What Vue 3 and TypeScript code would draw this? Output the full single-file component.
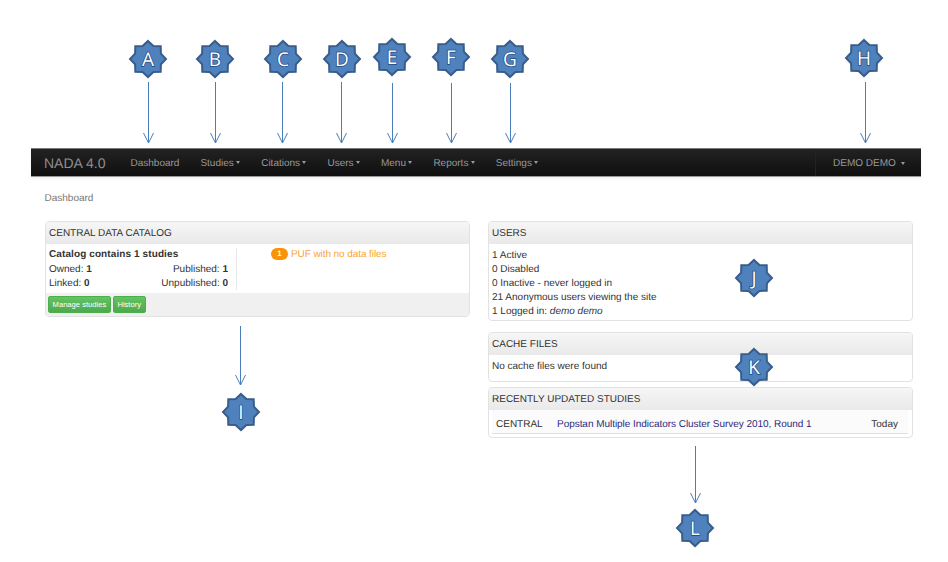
<script setup lang="ts">
interface Marker {
  label: string
  x: number
  y: number
  arrow?: { x: number; from: number; to: number }
}

const navItems = [
  { label: 'Dashboard', caret: false },
  { label: 'Studies', caret: true },
  { label: 'Citations', caret: true },
  { label: 'Users', caret: true },
  { label: 'Menu', caret: true },
  { label: 'Reports', caret: true },
  { label: 'Settings', caret: true },
]

const markers: Marker[] = [
  { label: 'A', x: 148, y: 59, arrow: { x: 148.5, from: 82, to: 143 } },
  { label: 'B', x: 215, y: 59, arrow: { x: 215.5, from: 82, to: 143 } },
  { label: 'C', x: 283, y: 59, arrow: { x: 282.5, from: 82, to: 143 } },
  { label: 'D', x: 342, y: 59, arrow: { x: 341.5, from: 82, to: 143 } },
  { label: 'E', x: 392, y: 57, arrow: { x: 392.5, from: 83, to: 143 } },
  { label: 'F', x: 451, y: 57, arrow: { x: 451.5, from: 83, to: 143 } },
  { label: 'G', x: 510, y: 59, arrow: { x: 510.5, from: 83, to: 143 } },
  { label: 'H', x: 864, y: 58, arrow: { x: 865.5, from: 82, to: 143 } },
  { label: 'I', x: 241, y: 412, arrow: { x: 240.5, from: 326, to: 385 } },
  { label: 'J', x: 754, y: 278 },
  { label: 'K', x: 754, y: 367 },
  { label: 'L', x: 695, y: 528, arrow: { x: 695.5, from: 446, to: 503 } },
]

// estrella de 8 puntas, igual que la forma de Office
function starPoints(cx: number, cy: number): string {
  const pts: string[] = []
  for (let i = 0; i < 16; i++) {
    const r = i % 2 === 0 ? 18 : 14
    const a = (i * Math.PI) / 8 - Math.PI / 2
    pts.push(`${(cx + r * Math.cos(a)).toFixed(1)},${(cy + r * Math.sin(a)).toFixed(1)}`)
  }
  return pts.join(' ')
}

const userLines = ['1 Active', '0 Disabled', '0 Inactive - never logged in', '21 Anonymous users viewing the site']
</script>

<template>
  <div class="page">
    <nav class="navbar">
      <span class="brand">NADA 4.0</span>
      <ul class="nav">
        <li v-for="item in navItems" :key="item.label">
          {{ item.label }}<i v-if="item.caret" class="caret"></i>
        </li>
      </ul>
      <div class="user-menu">DEMO DEMO<i class="caret caret-user"></i></div>
    </nav>

    <div class="crumb">Dashboard</div>

    <div class="columns">
      <div class="col">
        <section class="panel">
          <h3 class="panel-head">CENTRAL DATA CATALOG</h3>
          <div class="catalog-body">
            <div class="catalog-stats">
              <strong class="catalog-title">Catalog contains 1 studies</strong>
              <div class="stat-row">
                <span>Owned: <b>1</b></span>
                <span>Published: <b>1</b></span>
              </div>
              <div class="stat-row">
                <span>Linked: <b>0</b></span>
                <span>Unpublished: <b>0</b></span>
              </div>
            </div>
            <div class="catalog-alerts">
              <span class="badge">1</span>
              <span class="alert-text">PUF with no data files</span>
            </div>
          </div>
          <div class="catalog-foot">
            <button class="btn">Manage studies</button>
            <button class="btn">History</button>
          </div>
        </section>
      </div>

      <div class="col">
        <section class="panel users">
          <h3 class="panel-head">USERS</h3>
          <div class="panel-body">
            <div v-for="line in userLines" :key="line" class="line">{{ line }}</div>
            <div class="line">1 Logged in: <em>demo demo</em></div>
          </div>
        </section>

        <section class="panel cache">
          <h3 class="panel-head">CACHE FILES</h3>
          <div class="panel-body">
            <div class="line">No cache files were found</div>
          </div>
        </section>

        <section class="panel recent">
          <h3 class="panel-head">RECENTLY UPDATED STUDIES</h3>
          <div class="recent-row">
            <span class="repo">CENTRAL</span>
            <a class="study">Popstan Multiple Indicators Cluster Survey 2010, Round 1</a>
            <span class="when">Today</span>
          </div>
        </section>
      </div>
    </div>

    <!-- anotaciones encima de la captura -->
    <svg class="notes" width="948" height="562" viewBox="0 0 948 562">
      <g v-for="m in markers" :key="m.label">
        <g v-if="m.arrow" class="arrow">
          <line :x1="m.arrow.x" :y1="m.arrow.from" :x2="m.arrow.x" :y2="m.arrow.to" />
          <polyline
            :points="`${m.arrow.x - 5},${m.arrow.to - 10} ${m.arrow.x},${m.arrow.to} ${m.arrow.x + 5},${m.arrow.to - 10}`"
          />
        </g>
        <polygon class="star" :points="starPoints(m.x, m.y)" />
        <text class="star-label" :x="m.x" :y="m.y + 7" text-anchor="middle">{{ m.label }}</text>
      </g>
    </svg>
  </div>
</template>

<style scoped>
.page {
  position: relative;
  width: 948px;
  height: 562px;
  overflow: hidden;
  padding-top: 148px;
  box-sizing: border-box;
  background: #fff;
  font-family: "Liberation Sans", Arial, sans-serif;
  font-size: 10px;
  color: #333;
  text-rendering: geometricPrecision;
}

.navbar {
  display: flex;
  align-items: center;
  width: 890px;
  height: 29px;
  margin-left: 31px;
  padding-top: 1px;
  box-sizing: border-box;
  background: linear-gradient(#222, #0f0f0f);
  border-top: 1px solid #777;
  border-bottom: 1px solid #999;
  box-shadow: 0 2px 3px rgba(0, 0, 0, 0.06);
  color: #999;
}

.brand {
  margin-left: 13px;
  margin-right: 14.5px;
  font-size: 14px;
  color: #8f8f8f;
}

.nav {
  display: flex;
  flex: 1;
  margin: 0;
  padding: 0;
  list-style: none;
}

.nav li {
  padding: 0 10.5px;
  white-space: nowrap;
}

.caret {
  display: inline-block;
  margin-left: 2.4px;
  vertical-align: 2px;
  border-top: 3px solid #999;
  border-left: 2.5px solid transparent;
  border-right: 2.5px solid transparent;
}

.caret-user {
  margin-left: 5px;
}

.user-menu {
  align-self: stretch;
  display: flex;
  align-items: center;
  width: 106px;
  padding-left: 17px;
  box-sizing: border-box;
  border-left: 1px solid #222;
}

.crumb {
  margin: 16px 0 0 44.5px;
  height: 28px;
  color: #777;
}

.columns {
  display: grid;
  grid-template-columns: 425px 425px;
  column-gap: 18px;
  margin-left: 45px;
}

.col {
  display: flex;
  flex-direction: column;
  align-items: stretch;
}

.panel {
  box-sizing: border-box;
  border: 1px solid #e2e2e2;
  border-radius: 4px;
  background: #fff;
  overflow: hidden;
}

.panel-head {
  height: 22px;
  margin: 0;
  padding-left: 3px;
  box-sizing: border-box;
  line-height: 23px;
  font-size: 10px;
  font-weight: normal;
  color: #333;
  background: linear-gradient(#f6f6f6, #e9e9e9);
}

.panel-body {
  padding: 5px 3px 0;
}

.line {
  height: 14px;
  line-height: 14px;
}

.users {
  height: 100px;
}

.cache {
  height: 50px;
  margin-top: 11px;
}

.recent {
  height: 51px;
  margin-top: 5px;
}

.catalog-body {
  display: flex;
  height: 49px;
  padding: 4px 0 0 3px;
  box-sizing: border-box;
}

.catalog-stats {
  width: 188px;
  height: 42px;
  padding-right: 8px;
  box-sizing: border-box;
  border-right: 1px solid #e8e8e8;
}

.catalog-title {
  display: block;
  height: 15px;
  line-height: 14px;
  letter-spacing: 0.1px;
}

.stat-row {
  display: flex;
  justify-content: space-between;
  height: 14px;
  line-height: 14px;
}

.catalog-alerts {
  display: flex;
  align-items: flex-start;
  margin-left: 34px;
}

.badge {
  width: 17px;
  height: 12px;
  margin-right: 3px;
  border-radius: 6px;
  background: #f89406;
  color: #fff;
  font-size: 8px;
  font-weight: bold;
  line-height: 12px;
  text-align: center;
}

.alert-text {
  line-height: 14px;
  letter-spacing: -0.08px;
  color: #f9a534;
}

.catalog-foot {
  display: flex;
  gap: 2px;
  height: 23px;
  padding: 3px 0 0 2px;
  box-sizing: border-box;
  background: #f0f0f0;
}

.btn {
  height: 17px;
  padding: 0 3.6px;
  border: 1px solid #4cae4c;
  border-radius: 2px;
  background: linear-gradient(#62c462, #4ea94e);
  color: #fff;
  font-family: inherit;
  font-size: 7.6px;
  line-height: 15px;
}

.recent-row {
  display: flex;
  height: 24px;
  margin: 0 4px 0 3px;
  padding: 6px 10px 0 4px;
  box-sizing: border-box;
  align-items: center;
  border-bottom: 1px solid #d5e6e6;
  background: #fbfbfb;
}

.repo {
  width: 61px;
}

.study {
  flex: 1;
  letter-spacing: -0.04px;
  color: #2b2a7c;
}

.notes {
  position: absolute;
  left: 0;
  top: 0;
  pointer-events: none;
}

.arrow line,
.arrow polyline {
  fill: none;
  stroke: #4a7ebb;
  stroke-width: 1;
}

.star {
  fill: #4f81bd;
  stroke: #385d8a;
  stroke-width: 2;
}

.star-label {
  fill: #fff;
  stroke: #1f497d;
  stroke-width: 1.4px;
  paint-order: stroke;
  font-family: "Open Sans", "Liberation Sans", sans-serif;
  font-size: 19px;
}
</style>
